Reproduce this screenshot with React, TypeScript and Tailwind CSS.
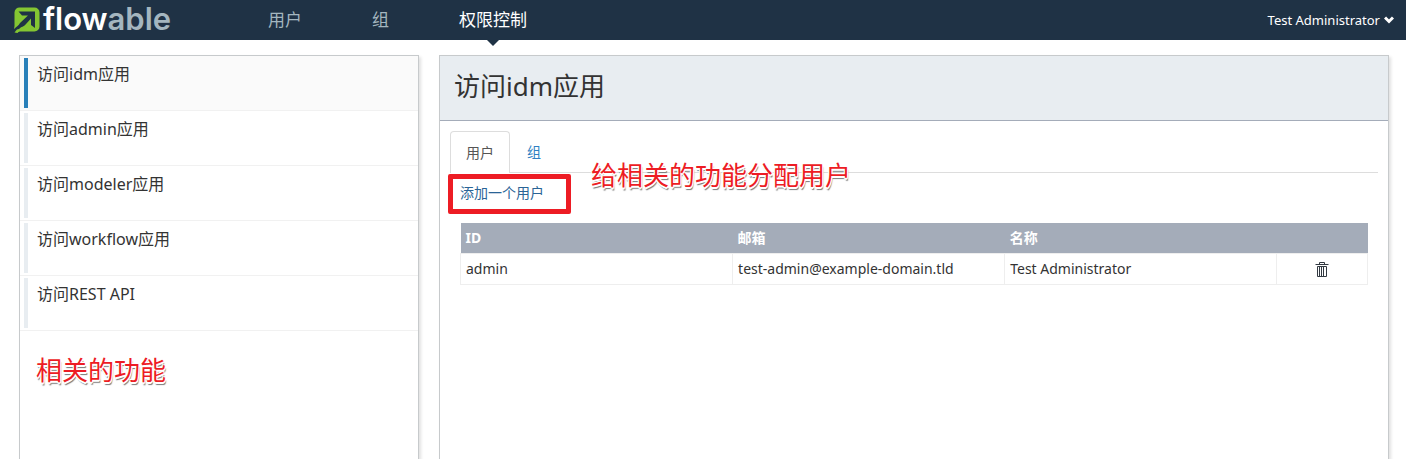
import React from 'react';

const NAV = [
  { label: '用户', active: false },
  { label: '组', active: false },
  { label: '权限控制', active: true },
];

const PRIVILEGES = ['访问idm应用', '访问admin应用', '访问modeler应用', '访问workflow应用', '访问REST API'];

const USERS = [{ id: 'admin', email: 'test-admin@example-domain.tld', name: 'Test Administrator' }];

function Logo() {
  return (
    <a href="#" aria-label="flowable" className="flex h-10 w-[160px] shrink-0 items-center">
      <svg viewBox="0 0 26 26" className="size-[26px] shrink-0" aria-hidden="true">
        <path d="M6 0.500H20.500a5 5 0 0 1 5 5V19.500a5 5 0 0 1-5 5H6L3 25.500 0 22 0.500 19V5.500a5 5 0 0 1 5.500-5z" fill="#84c632" />
        <path
          d="M4.500 4.500H21V21L17 18V11.500L12 17C9.500 20 7.500 19.500 5 22L1.500 26 0 25V22C3 19.500 4.500 18.500 6 16L14 8.500H8z"
          fill="#1f3245"
        />
        <path d="M0.500 25.500C2 23 3.500 22 4.500 22L5.500 23.500 3.500 26z" fill="#84c632" />
      </svg>
      <span className="ml-[3px] pb-0.5 font-[family-name:Inter,sans-serif] text-[31px] leading-9 font-semibold text-white">
        flow<span className="text-[#a4b6bf]">able</span>
      </span>
    </a>
  );
}

function TrashIcon() {
  return (
    <svg viewBox="0 0 14 16" className="h-4 w-3.5" fill="none" stroke="#333a42" aria-hidden="true">
      <path d="M0.500 3.500H13.500M4.500 3V1.500H9.500V3M2.500 5.500H11.500V15.500H2.500zM4.500 6V15M6.500 6V15M8.500 6V15" />
    </svg>
  );
}

export default function App() {
  return (
    <div className="relative flex min-h-screen flex-col bg-white font-[family-name:'Noto_Sans','Noto_Sans_CJK_SC',sans-serif] text-sm text-[#333]">
      <header className="flex h-10 shrink-0 items-center bg-[#1f3245] pr-3 pl-3.5">
        <Logo />
        <nav className="ml-[76px] flex flex-1 text-[17px]">
          {NAV.map((item) => (
            <a
              key={item.label}
              href="#"
              className={
                item.active
                  ? 'relative flex h-10 items-center px-[35px] text-white'
                  : 'relative flex h-10 items-center px-[35px] text-[#a4b6bf] first:pl-[18px]'
              }
            >
              {item.label}
              {item.active && (
                <svg viewBox="0 0 12 6" className="absolute top-full left-1/2 h-1.5 w-3 -translate-x-1/2" aria-hidden="true">
                  <path d="M0 0H12L6 6z" fill="#1f3245" />
                </svg>
              )}
            </a>
          ))}
        </nav>
        <button type="button" className="flex items-center gap-1 text-[13px] text-white">
          Test Administrator
          <svg viewBox="0 0 10 8" className="h-2 w-2.5" fill="none" stroke="#fff" strokeWidth="3" aria-hidden="true">
            <path d="M1 1.500L5 5.500 9 1.500" />
          </svg>
        </button>
      </header>

      <div className="flex flex-1 gap-5 pt-[15px] pr-[17px] pl-[19px]">
        <aside className="w-[400px] shrink-0 border border-b-0 border-[#c7cacc] shadow-[2px_2px_3px_rgba(0,0,0,0.12)]">
          <ul>
            {PRIVILEGES.map((label, i) => (
              <li key={label} className={i === 0 ? 'border-b border-[#f1f1f1] bg-[#fafafa]' : 'border-b border-[#f1f1f1]'}>
                <a href="#" className="flex h-[54px] gap-[9px] px-1 py-0.5 text-base">
                  <span className={i === 0 ? 'w-1 bg-[#2980b9]' : 'w-1 bg-[#e8edf1]'} />
                  <span className="pt-1">{label}</span>
                </a>
              </li>
            ))}
          </ul>
        </aside>

        <main className="min-w-0 flex-1 border border-b-0 border-[#c7cacc] shadow-[2px_2px_3px_rgba(0,0,0,0.12)]">
          <div className="h-[65px] border-b border-[#a4acb9] bg-[#e8edf1] px-3.5 pt-3">
            <h2 className="text-[26px] leading-9">访问idm应用</h2>
          </div>
          <div className="p-2.5">
            <div role="tablist" className="flex border-b border-[#ddd]">
              <button
                type="button"
                role="tab"
                aria-selected="true"
                className="-mb-px h-[42px] rounded-t border border-b-0 border-[#ddd] bg-white px-[15px] text-[#555]"
              >
                用户
              </button>
              <button type="button" role="tab" aria-selected="false" className="h-[41px] px-[17px] text-[#2e7fc2]">
                组
              </button>
            </div>
            <div className="px-2.5">
              <div className="relative flex h-[50px] items-start pt-2.5">
                <button type="button" className="leading-5 text-[#2a6496]">
                  添加一个用户
                </button>
                <span className="pointer-events-none absolute top-px -left-3 h-10 w-[123px] rounded-xs border-5 border-[#ed1c24]" />
              </div>
              <table className="w-full table-fixed border-collapse text-left">
                <thead>
                  <tr className="h-[30px] bg-[#a4acb9] text-white">
                    <th className="w-[30%] px-[5px] font-bold">ID</th>
                    <th className="w-[30%] px-[5px] font-bold">邮箱</th>
                    <th className="w-[30%] px-[5px] font-bold">名称</th>
                    <th className="w-[10%]" />
                  </tr>
                </thead>
                <tbody>
                  {USERS.map((user) => (
                    <tr key={user.id} className="h-[31px]">
                      <td className="border border-[#eee] px-[5px]">{user.id}</td>
                      <td className="border border-[#eee] px-[5px]">{user.email}</td>
                      <td className="border border-[#eee] px-[5px]">{user.name}</td>
                      <td className="border border-[#eee]">
                        <button type="button" aria-label="删除" className="mx-auto block">
                          <TrashIcon />
                        </button>
                      </td>
                    </tr>
                  ))}
                </tbody>
              </table>
            </div>
          </div>
        </main>
      </div>

      <p className="pointer-events-none absolute top-[352px] left-9 text-[26px] leading-9 text-[#ed1c24] [text-shadow:-1px_-1px_0_#fff,1px_-1px_0_#fff,-1px_1px_0_#fff,1px_1px_0_#fff,0_2px_0_#fff,1px_3px_1px_#777]">
        相关的功能
      </p>
      <p className="pointer-events-none absolute top-[157px] left-[591px] text-[26px] leading-9 text-[#ed1c24] [text-shadow:-1px_-1px_0_#fff,1px_-1px_0_#fff,-1px_1px_0_#fff,1px_1px_0_#fff,0_2px_0_#fff,1px_3px_1px_#777]">
        给相关的功能分配用户
      </p>
    </div>
  );
}
